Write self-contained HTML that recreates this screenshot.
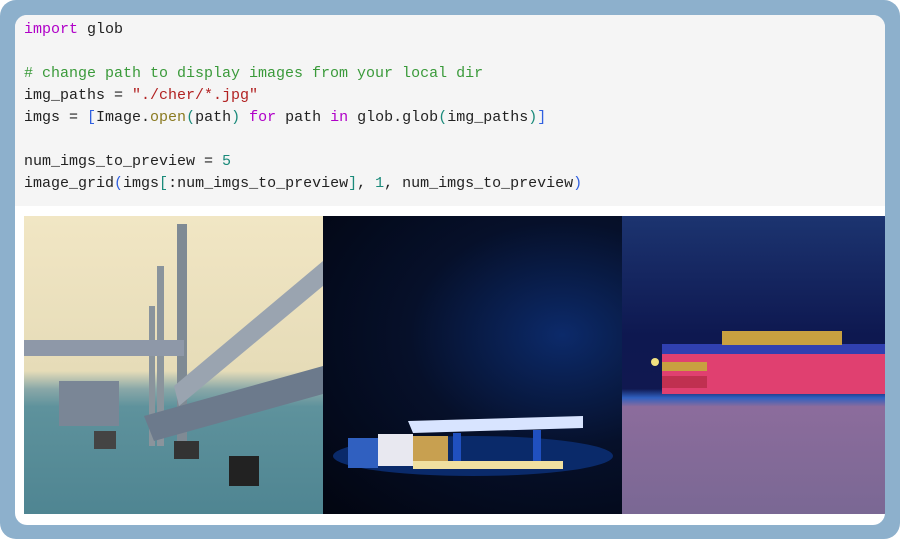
<!DOCTYPE html>
<html><head><style>
*{margin:0;padding:0;box-sizing:border-box}
body{width:900px;height:539px;background:#fff;position:relative;overflow:hidden}
.outer{position:absolute;left:0;top:0;width:900px;height:539px;background:#8db0cc;border-radius:16px}
.card{position:absolute;left:15px;top:15px;width:870px;height:510px;background:#fff;border-radius:12px;overflow:hidden}
.code{position:absolute;left:0;top:0;width:870px;height:191px;background:#f5f5f5}
pre{position:absolute;left:9px;top:4px;font-family:"Liberation Mono",monospace;font-size:15px;line-height:22px;color:#222}
.k{color:#b000c8}.c{color:#3a9a3a}.s{color:#b22222}.f{color:#8a7a20}.n{color:#1a8a7a}.b{color:#3060e0}
.im{position:absolute;top:201px;height:298px}
</style></head><body>
<div class="outer"></div>
<div class="card">
<div class="code"><pre><span class="k">import</span> glob

<span class="c"># change path to display images from your local dir</span>
img_paths = <span class="s">"./cher/*.jpg"</span>
imgs = <span class="b">[</span>Image.<span class="f">open</span><span class="n">(</span>path<span class="n">)</span> <span class="k">for</span> path <span class="k">in</span> glob.glob<span class="n">(</span>img_paths<span class="n">)</span><span class="b">]</span>

num_imgs_to_preview = <span class="n">5</span>
image_grid<span class="b">(</span>imgs<span class="n">[</span>:num_imgs_to_preview<span class="n">]</span>, <span class="n">1</span>, num_imgs_to_preview<span class="b">)</span></pre></div>
<div class="im" style="left:9px;width:299px;background:linear-gradient(#f1e6c4 0%,#e6dcb8 52%,#8aa8a8 58%,#5e929c 64%,#4f8592 100%)">
<svg width="299" height="298" viewBox="0 0 299 298">
<rect x="153" y="8" width="10" height="230" fill="#7f8a94"/>
<rect x="133" y="50" width="7" height="180" fill="#8a949c"/>
<rect x="125" y="90" width="6" height="140" fill="#8a949c"/>
<rect x="0" y="124" width="160" height="16" fill="#8e98a8"/>
<polygon points="150,170 299,45 299,70 155,190" fill="#9aa4b0"/>
<polygon points="120,200 299,150 299,178 130,225" fill="#6c7a8c"/>
<rect x="35" y="165" width="60" height="45" fill="#7a8696"/>
<rect x="205" y="240" width="30" height="30" fill="#222"/>
<rect x="150" y="225" width="25" height="18" fill="#333"/>
<rect x="70" y="215" width="22" height="18" fill="#444"/>
</svg></div>
<div class="im" style="left:308px;width:299px;background:radial-gradient(ellipse at 80% 40%,#0c2a6a 0%,#06102a 45%,#020510 100%)">
<svg width="299" height="298" viewBox="0 0 299 298">
<ellipse cx="150" cy="240" rx="140" ry="20" fill="#0a2a6a"/>
<polygon points="85,205 260,200 260,212 90,217" fill="#d8e4ff"/>
<rect x="130" y="217" width="8" height="36" fill="#2050c0"/>
<rect x="210" y="214" width="8" height="38" fill="#2050c0"/>
<rect x="85" y="220" width="40" height="30" fill="#c8a050"/>
<rect x="25" y="222" width="30" height="30" fill="#3060c0"/>
<rect x="55" y="218" width="35" height="32" fill="#e8e8f0"/>
<rect x="90" y="245" width="150" height="8" fill="#f0e0a0"/>
</svg></div>
<div class="im" style="left:607px;width:263px;background:linear-gradient(#1c3470 0%,#0e1850 40%,#101850 58%,#3060c0 61%,#8c6c9c 64%,#7a6894 100%)">
<svg width="263" height="298" viewBox="0 0 263 298">
<rect x="40" y="128" width="223" height="10" fill="#3040b0"/>
<rect x="100" y="115" width="120" height="14" fill="#c8a040"/>
<rect x="40" y="138" width="223" height="40" fill="#e04070"/>
<rect x="40" y="146" width="45" height="9" fill="#c8a040"/>
<rect x="40" y="160" width="45" height="12" fill="#c03050"/>
<circle cx="33" cy="146" r="4" fill="#f0e080"/>
</svg></div>
</div>
</body></html>
